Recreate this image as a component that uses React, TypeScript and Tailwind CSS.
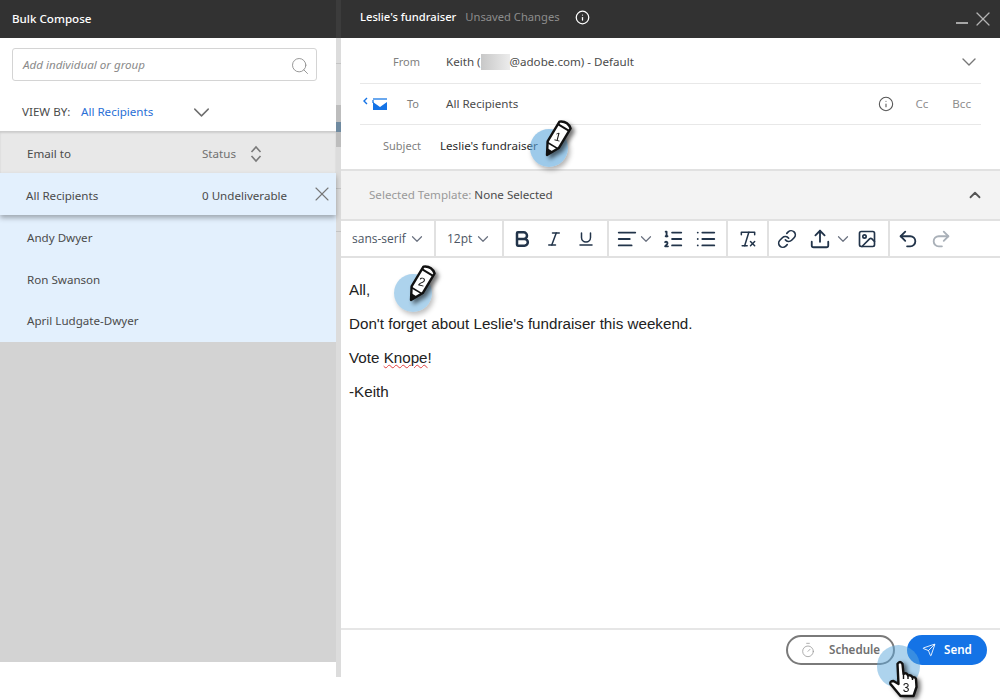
import React from 'react'
import { ChevronDown, ChevronUp, Search, X, Info, Bold, Italic, Underline, AlignLeft, ListOrdered, List, RemoveFormatting, Link, Upload, Image, Undo2, Redo2, Send, Timer } from 'lucide-react'

// tip of the pencil sits at svg (6, 40)
const Pencil = ({ n }: { n: string }) => (
	<svg width='40' height='44' viewBox='-6 -40 40 44' className='absolute overflow-visible drop-shadow-[3px_3px_2px_rgba(0,0,0,0.55)]'>
		<g transform='rotate(31)'>
			<path d='M-6.5 -35 q6.5 -5 13 0 v23 l-6.5 12 l-6.5 -12 z' fill='#fff' stroke='#111' strokeWidth='2.4' strokeLinejoin='round' />
			<path d='M-6.5 -32 h13' stroke='#111' strokeWidth='2' />
			<path d='M-6.5 -11 h13' stroke='#111' strokeWidth='1.6' />
			<path d='M-3.5 -6 l3.5 6 l3.5 -6 z' fill='#111' />
			<text x='0' y='-17' fontSize='12' textAnchor='middle' fill='#111' fontFamily='Liberation Sans, sans-serif' transform='rotate(-16 0 -21)'>{n}</text>
		</g>
	</svg>
)

const Divider = () => <div className='w-[2px] h-full bg-[#e1e1e1]' />

const App = () => {
	return (
		<div className="relative w-[1000px] h-[700px] bg-white overflow-hidden flex items-start font-['Noto_Sans',sans-serif] text-[11.6px] text-[#4b4b4b]">
			{/*Left Panel*/}
			<aside className='w-[336px] h-[662px] flex flex-col bg-[#d3d3d3]'>
				<div className='h-[38px] bg-[#323232] text-white flex items-center pl-[12px] font-medium'>Bulk Compose</div>
				<div className='h-[93px] bg-white px-[12px] pt-[10px]'>
					<div className='h-[33px] w-[305px] border border-[#d4d4d4] rounded-[3px] flex items-center justify-between pl-[10px] pr-[6px]'>
						<span className='italic text-[#8a8a8a] pt-[1px]'>Add individual or group</span>
						<Search size={20} strokeWidth={1.1} className='text-[#8e8e8e] mt-[2px]' />
					</div>
					<div className='flex items-center mt-[23px] pl-[10px] h-[16px]'>
						<span className='text-[#4b4b4b] w-[59px]'>VIEW BY:</span>
						<span className='text-[#2a6fd6] w-[107px]'>All Recipients</span>
						<ChevronDown size={27} strokeWidth={1.3} className='text-[#6e6e6e] shrink-0' />
					</div>
				</div>
				<div className='h-[42px] bg-[#e8e8e8] flex items-center pt-[3px] shadow-[inset_0_2px_2px_rgba(0,0,0,0.12)]'>
					<span className='pl-[27px] w-[202px]'>Email to</span>
					<span className='text-[#707070] w-[48px]'>Status</span>
					<svg width='12' height='18' viewBox='0 0 12 18' fill='none' stroke='#7a7a7a' strokeWidth='1.6'>
						<path d='M1.5 7 L6 2 L10.5 7 M1.5 11 L6 16 L10.5 11' />
					</svg>
				</div>
				<div className='relative h-[42px] bg-[#e3f0fd] flex items-center pt-[3px] shadow-[0_3px_5px_rgba(0,0,0,0.3)]'>
					<span className='pl-[26px] w-[202px]'>All Recipients</span>
					<span>0 Undeliverable</span>
					<X size={24} strokeWidth={1.1} className='absolute left-[310px] top-[9px] text-[#777]' />
				</div>
				<div className='h-[42px] bg-[#e3f0fd] flex items-center pl-[27px] pt-[3px]'>Andy Dwyer</div>
				<div className='h-[42px] bg-[#e3f0fd] flex items-center pl-[27px] pt-[3px]'>Ron Swanson</div>
				<div className='h-[43px] bg-[#e3f0fd] flex items-center pl-[27px] pt-[1px]'>April Ludgate-Dwyer</div>
			</aside>

			{/*Panel gutter, page behind shows through*/}
			<div className='w-[5px] h-[677px] flex flex-col bg-[#dcdcdc]'>
				<div className='h-[38px] bg-[#3c3c3c]' />
				<div className='h-[25px]' />
				<div className='h-[1px] bg-[#c4c4c4]' />
				<div className='h-[41px]' />
				<div className='h-[17px] bg-[#bdbdbd]' />
				<div className='h-[10px] bg-[#6f8aa0]' />
				<div className='h-[15px] bg-[#bdbdbd]' />
				<div className='h-[41px]' />
				<div className='h-[1px] bg-[#c4c4c4]' />
				<div className='h-[42px]' />
				<div className='h-[1px] bg-[#c4c4c4]' />
			</div>

			{/*Compose Panel*/}
			<main className='w-[659px] h-[677px] flex flex-col bg-white'>
				<header className='h-[38px] bg-[#323232] flex items-center pl-[19px] pr-[5px] text-[11.2px] pb-[3px]'>
					<span className='text-white font-medium'>Leslie's fundraiser</span>
					<span className='text-[#8d8d8d] ml-[9px]'>Unsaved Changes</span>
					<Info size={15} strokeWidth={2} className='text-white ml-[15px]' />
					<div className='ml-auto flex items-center gap-[3px] text-[#b3b3b3]'>
						<div className='w-[12px] h-[2px] bg-[#a6a6a6] mt-[11px]' />
						<X size={24} strokeWidth={1.2} className='mt-[3px]' />
					</div>
				</header>
				<div className='h-[46px] mx-[19px] border-b border-[#e8e8e8] flex items-center pt-[3px]'>
					<span className='w-[30px] ml-[33px] text-[11px] text-[#808080]'>From</span>
					<span className='ml-[23px] flex items-center'>
						Keith (<span className='inline-block w-[29px] h-[16px] bg-gradient-to-r from-[#c8c8c8] to-[#ececec]' />@adobe.com) - Default
					</span>
					<ChevronDown size={24} strokeWidth={1.4} className='ml-auto text-[#777]' />
				</div>
				<div className='h-[41px] mx-[19px] border-b border-[#e8e8e8] flex items-center'>
					<svg width='26' height='14' viewBox='0 0 26 14' className='ml-[2px]'>
						<path d='M5 1 L2 4 L5 7' fill='none' stroke='#1473e6' strokeWidth='1.4' />
						<rect x='11' y='1' width='14' height='2' fill='#6aa8ee' />
						<rect x='10' y='3' width='2' height='3' fill='#6aa8ee' />
						<path d='M11 5 l7 5 l7 -5 v8 h-14 z' fill='#1473e6' />
					</svg>
					<span className='ml-[19px] w-[12px] text-[11px] text-[#808080]'>To</span>
					<span className='ml-[27px]'>All Recipients</span>
					<div className='ml-auto flex items-center text-[#8e8e8e]'>
						<Info size={16} strokeWidth={1.6} className='text-[#555]' />
						<span className='ml-[21px]'>Cc</span>
						<span className='ml-[24px] mr-[10px]'>Bcc</span>
					</div>
				</div>
				<div className='h-[44px] flex items-center pl-[42px] pb-[2px]'>
					<span className='text-[11px] text-[#808080] w-[57px]'>Subject</span>
					<span className='text-[#2c2c2c]'>Leslie's fundraiser</span>
				</div>
				<div className='h-[50px] bg-[#f3f3f3] border-t-2 border-[#e1e1e1] flex items-center pl-[28px] pr-[16px]'>
					<span className='text-[#9a9a9a]'>Selected Template:</span>
					<span className='ml-[3px]'>None Selected</span>
					<ChevronUp size={18} strokeWidth={2.4} className='ml-auto text-[#555]' />
				</div>
				{/*Toolbar*/}
				<div className='h-[39px] flex items-center border-t-2 border-b-2 border-[#e1e1e1] text-[#22344a]'>
					<div className='w-[93px] flex items-center pl-[11px] gap-[2px]'>
						<span className="text-[#4b5563] font-['Open_Sans',sans-serif] text-[12px]">sans-serif</span>
						<ChevronDown size={18} strokeWidth={1.6} className='text-[#6b7280]' />
					</div>
					<Divider />
					<div className='w-[66px] flex items-center pl-[11px] gap-[2px]'>
						<span className="text-[#4b5563] font-['Open_Sans',sans-serif] text-[12px]">12pt</span>
						<ChevronDown size={18} strokeWidth={1.6} className='text-[#6b7280]' />
					</div>
					<Divider />
					<div className='w-[103px] flex items-center pl-[2px]'>
						<div className='w-[32px] flex justify-center'><Bold size={20} strokeWidth={3} /></div>
						<div className='w-[32px] flex justify-center'><Italic size={18} strokeWidth={2} /></div>
						<div className='w-[32px] flex justify-center'><Underline size={18} strokeWidth={2} /></div>
					</div>
					<Divider />
					<div className='w-[117px] flex items-center'>
						<AlignLeft size={22} strokeWidth={2} className='ml-[7px]' />
						<ChevronDown size={18} strokeWidth={1.6} className='-ml-[1px] text-[#6b7280]' />
						<ListOrdered size={22} strokeWidth={2} className='ml-[7px]' />
						<List size={22} strokeWidth={2} className='ml-[11px]' />
					</div>
					<Divider />
					<div className='w-[39px] flex items-center justify-center'>
						<RemoveFormatting size={20} strokeWidth={1.8} />
					</div>
					<Divider />
					<div className='w-[119px] flex items-center'>
						<Link size={20} strokeWidth={2} className='ml-[8px]' />
						<Upload size={22} strokeWidth={2} className='ml-[12px]' />
						<ChevronDown size={18} strokeWidth={1.6} className='ml-[3px] text-[#6b7280]' />
						<Image size={20} strokeWidth={2} className='ml-[5px]' />
					</div>
					<Divider />
					<div className='flex items-center pl-[7px] gap-[11px]'>
						<Undo2 size={22} strokeWidth={2} />
						<Redo2 size={22} strokeWidth={2} className='text-[#a9b0b8]' />
					</div>
				</div>
				{/*Editor*/}
				<div className="flex-1 pl-[8px] pt-[15px] font-['Liberation_Sans',sans-serif] text-[15.2px] leading-[34px] text-[#222]">
					<p>All,</p>
					<p>Don't forget about Leslie's fundraiser this weekend.</p>
					<p>Vote <span className='underline decoration-wavy decoration-[#e04040] decoration-1'>Knope</span>!</p>
					<p>-Keith</p>
				</div>
				<footer className='h-[49px] border-t-2 border-[#e6e6e6] flex items-start justify-end gap-[12px] pr-[13px] pt-[5px]'>
					<button className='w-[109px] h-[30px] rounded-full border-2 border-[#7a7a7a] flex items-center pl-[12px] font-semibold text-[#707070]'>
						<Timer size={16} strokeWidth={1.2} className='text-[#999]' />
						<span className='ml-[13px]'>Schedule</span>
					</button>
					<button className='w-[80px] h-[30px] rounded-full bg-[#1473e6] flex items-center pl-[15px] font-semibold text-white'>
						<Send size={14} strokeWidth={1.5} />
						<span className='ml-[8px]'>Send</span>
					</button>
				</footer>
			</main>

			{/*Annotations*/}
			<div className='absolute left-[530px] top-[129px] w-[38px] h-[38px] rounded-full bg-[#5ba7dc]/60 shadow-[2px_3px_5px_rgba(0,0,0,0.3)]' />
			<div className='absolute left-[541px] top-[115px]'><Pencil n='1' /></div>
			<div className='absolute left-[394px] top-[274px] w-[38px] h-[38px] rounded-full bg-[#5ba7dc]/50 shadow-[2px_3px_5px_rgba(0,0,0,0.25)]' />
			<div className='absolute left-[405px] top-[260px]'><Pencil n='2' /></div>
			<div className='absolute left-[877px] top-[645px] w-[43px] h-[43px] rounded-full bg-[#5ba7dc]/50' />
			<svg width='32' height='40' viewBox='0 0 32 40' className='absolute left-[888px] top-[660px] drop-shadow-[3px_2px_2px_rgba(0,0,0,0.55)]'>
				<path d='M9.5 4 q2.5 -4 5 0 l1 10 q2.5 -1.5 4 0.5 l0.5 1 q2.5 -1 4 1 l0.5 1 q2.5 -1 3.5 1.5 l0.5 8 l-3 9 h-13 l-10 -12 q-1 -3 3 -3 l5 3 z' fill='#fff' stroke='#111' strokeWidth='2.4' strokeLinejoin='round' />
				<path d='M15.5 14 v5 M20 15 v4 M24.5 17 v3' stroke='#111' strokeWidth='1.4' />
				<text x='18' y='32' fontSize='12' textAnchor='middle' fill='#111' fontFamily='Liberation Sans, sans-serif'>3</text>
			</svg>
		</div>
	)
}
export default App
